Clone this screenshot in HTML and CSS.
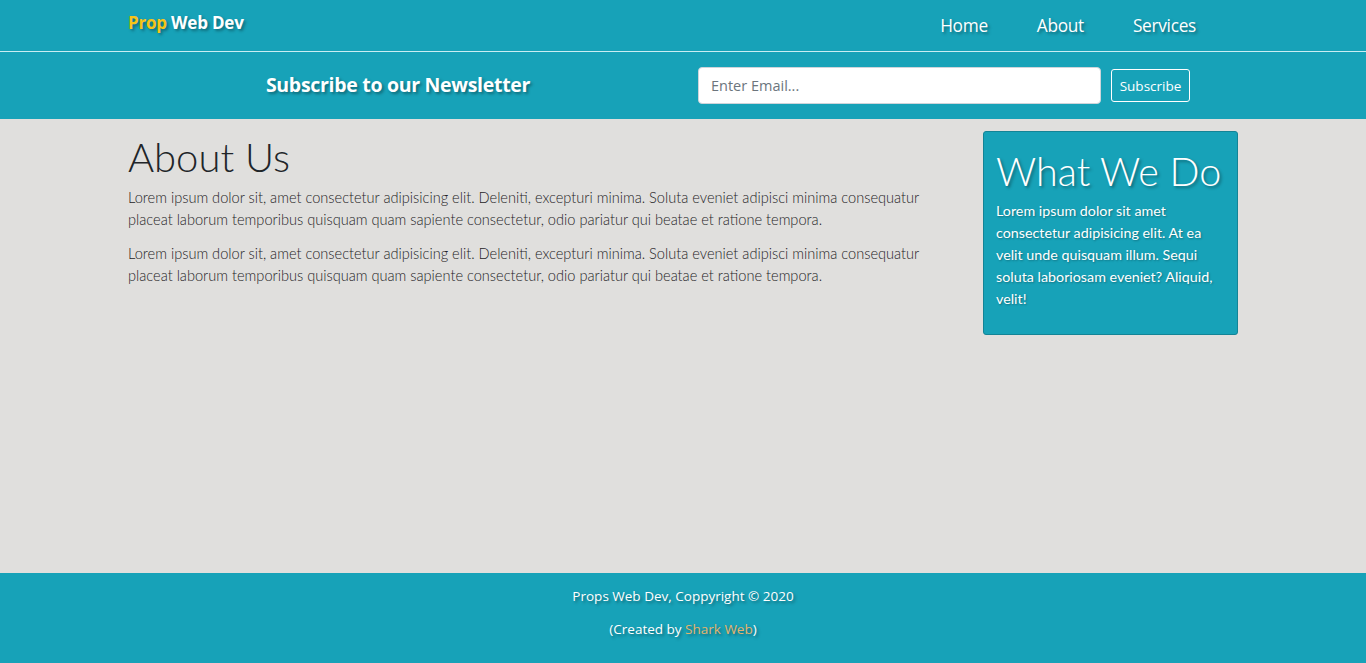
FILE: index.html
```html
<!DOCTYPE html>
<html lang="en">
<head>
<meta charset="utf-8">
<title>Prop Web Dev | About</title>
<link rel="stylesheet" href="styles.css">
</head>
<body>
<header class="topbar">
  <div class="container topbar-inner">
    <div class="brand"><span class="brand-hl">Prop</span> Web Dev</div>
    <nav class="nav">
      <a href="#">Home</a>
      <a href="#">About</a>
      <a href="#">Services</a>
    </nav>
  </div>
</header>
<section class="newsletter">
  <div class="container news-row">
    <div class="news-title-col"><h2 class="news-title">Subscribe to our Newsletter</h2></div>
    <form class="news-form">
      <input class="news-input" type="email" placeholder="Enter Email...">
      <button class="news-btn" type="button">Subscribe</button>
    </form>
  </div>
</section>
<main class="main">
  <div class="container main-row">
    <article class="about">
      <h1 class="about-title">About Us</h1>
      <p>Lorem ipsum dolor sit, amet consectetur adipisicing elit. Deleniti, excepturi minima. Soluta eveniet adipisci minima consequatur placeat laborum temporibus quisquam quam sapiente consectetur, odio pariatur qui beatae et ratione tempora.</p>
      <p>Lorem ipsum dolor sit, amet consectetur adipisicing elit. Deleniti, excepturi minima. Soluta eveniet adipisci minima consequatur placeat laborum temporibus quisquam quam sapiente consectetur, odio pariatur qui beatae et ratione tempora.</p>
    </article>
    <aside class="side">
      <div class="card">
        <h2 class="card-title">What We Do</h2>
        <p>Lorem ipsum dolor sit amet consectetur adipisicing elit. At ea velit unde quisquam illum. Sequi soluta laboriosam eveniet? Aliquid, velit!</p>
      </div>
    </aside>
  </div>
</main>
<footer class="footer">
  <p>Props Web Dev, Coppyright &copy; 2020</p>
  <p>(Created by <span class="credit">Shark Web</span>)</p>
</footer>
</body>
</html>
```
FILE: styles.css
```css
* { box-sizing: border-box; }
html, body { margin: 0; padding: 0; }
body {
  font-family: "Lato", "Open Sans", sans-serif;
  font-weight: 300;
  color: #212529;
  background: #e0dfdd;
  min-height: 100vh;
  display: flex;
  flex-direction: column;
}
.container {
  width: 1140px;
  margin: 0 auto;
  padding: 0 15px;
}
.topbar {
  background: #17a2b8;
  height: 52px;
  border-bottom: 1px solid #c9eef3;
}
.topbar-inner {
  display: flex;
  justify-content: space-between;
  align-items: flex-start;
}
.brand {
  font-family: "Open Sans", sans-serif;
  font-weight: 700;
  font-size: 17px;
  color: #fff;
  padding-top: 11px;
  letter-spacing: -0.2px;
  text-shadow: 2px 2px 3px rgba(0,0,0,0.35);
}
.brand-hl { color: #f6c417; }
.nav {
  display: flex;
  gap: 49px;
  padding: 14px 42px 0 0;
}
.nav a {
  font-family: "Open Sans", sans-serif;
  font-weight: 400;
  font-size: 17.3px;
  color: #fff;
  text-decoration: none;
  letter-spacing: -0.3px;
  text-shadow: 2px 2px 3px rgba(0,0,0,0.35);
}
.newsletter {
  background: #17a2b8;
  height: 67px;
}
.news-row {
  display: flex;
  align-items: center;
  height: 100%;
}
.news-title-col {
  width: 540px;
  text-align: center;
  padding-bottom: 3px;
}
.news-title {
  margin: 0;
  font-family: "Open Sans", sans-serif;
  font-weight: 700;
  font-size: 19.5px;
  color: #fff;
  letter-spacing: -0.3px;
  text-shadow: 2px 2px 3px rgba(0,0,0,0.35);
}
.news-form {
  display: flex;
  align-items: center;
  gap: 10px;
  margin-left: 30px;
}
.news-input {
  width: 403px;
  height: 37px;
  border: 1px solid #ced4da;
  border-radius: 4px;
  padding: 0 12px;
  font-family: "Open Sans", sans-serif;
  font-size: 14.5px;
  color: #495057;
  background: #fff;
}
.news-input::placeholder { color: #6c757d; }
.news-btn {
  width: 79px;
  height: 33px;
  background: transparent;
  border: 1px solid #fff;
  border-radius: 3px;
  color: #fff;
  font-family: "Open Sans", sans-serif;
  font-size: 13.5px;
  padding: 0;
}
.main {
  flex: 1;
  padding-top: 12px;
}
.main-row {
  display: flex;
  gap: 30px;
}
.about {
  width: 825px;
}
.about-title {
  margin: 2px 0 6px;
  font-size: 40px;
  font-weight: 300;
  line-height: 48px;
  color: #212529;
}
.about p {
  margin: 0 0 12px;
  font-size: 14.6px;
  line-height: 22px;
  color: #1f2326;
}
.side { width: 255px; }
.card {
  margin-top: 0;
  background: #17a2b8;
  border: 1px solid #138496;
  border-radius: 3px;
  padding: 12px 12px;
  color: #fff;
}
.card-title {
  margin: 3px 0 5px;
  font-size: 39.5px;
  font-weight: 300;
  line-height: 48px;
  letter-spacing: 0;
  white-space: nowrap;
  text-shadow: 2px 2px 3px rgba(0,0,0,0.35);
}
.card p {
  margin: 0 0 12px;
  font-size: 14.3px;
  line-height: 22px;
  font-weight: 400;
  text-shadow: 1px 1px 2px rgba(0,0,0,0.3);
}
.footer {
  background: #17a2b8;
  height: 90px;
  padding-top: 13px;
  text-align: center;
  color: #fff;
  font-family: "Open Sans", sans-serif;
  font-weight: 400;
  font-size: 13.5px;
  text-shadow: 2px 2px 3px rgba(0,0,0,0.35);
}
.footer p { margin: 0 0 13px; line-height: 20px; }
.credit { color: #e4b46c; }
```
